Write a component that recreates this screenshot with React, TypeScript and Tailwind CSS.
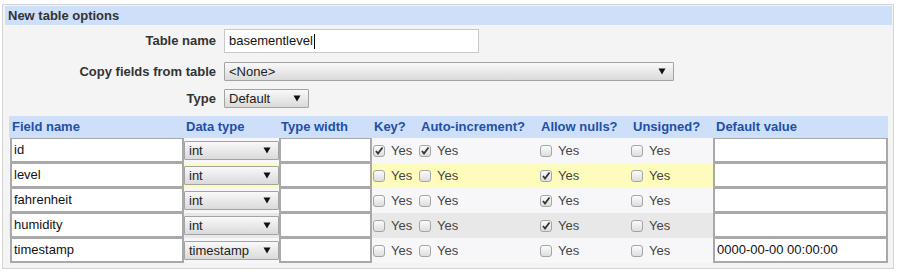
import React from "react";

function Arrow() {
  return (
    <svg width="8" height="7" viewBox="0 0 8 7" className="shrink-0">
      <polygon points="0.5,0.5 7.5,0.5 4,6.5" fill="#111" />
    </svg>
  );
}

function Select({ className, text }: { className: string; text: string }) {
  return (
    <div
      className={`flex h-[19px] items-center justify-between rounded-[1px] border border-[#a3a3a3] bg-gradient-to-b from-[#f9f9f9] to-[#dadada] pl-[4px] pr-[7px] text-[13px] leading-none text-[#222] ${className}`}
    >
      <span>{text}</span>
      <Arrow />
    </div>
  );
}

function Check({ checked }: { checked: boolean }) {
  return (
    <svg width="12" height="12" viewBox="0 0 12 12" className="shrink-0">
      <defs>
        <linearGradient id="cbg" x1="0" y1="0" x2="0" y2="1">
          <stop offset="0" stopColor="#fdfdfd" />
          <stop offset="1" stopColor="#dcdcdc" />
        </linearGradient>
      </defs>
      <rect x="0.5" y="0.5" width="11" height="11" rx="2.5" fill="url(#cbg)" stroke="#a5a5a5" />
      {checked && (
        <path d="M3 6 L5 8.5 L9.5 2.5" fill="none" stroke="#333" strokeWidth="1.8" />
      )}
    </svg>
  );
}

function CheckCell({ className, checked }: { className: string; checked: boolean }) {
  return (
    <div className={`flex h-full items-center gap-[6px] pl-[1px] ${className}`}>
      <Check checked={checked} />
      <span className="text-[13px] text-[#444]">Yes</span>
    </div>
  );
}

function Box({ className, text }: { className: string; text?: string }) {
  return (
    <div
      className={`flex h-full items-center border-t border-b-2 border-l-2 border-r-2 border-[#a9a9a9] bg-white pl-[2px] text-[13px] text-[#111] ${className}`}
    >
      {text}
    </div>
  );
}

type Row = {
  name: string;
  type: string;
  key: boolean;
  ai: boolean;
  nul: boolean;
  uns: boolean;
  def: string;
  bg: string;
};

const rows: Row[] = [
  { name: "id", type: "int", key: true, ai: true, nul: false, uns: false, def: "", bg: "bg-[#f7f7fa]" },
  { name: "level", type: "int", key: false, ai: false, nul: true, uns: false, def: "", bg: "bg-[#fefcbd]" },
  { name: "fahrenheit", type: "int", key: false, ai: false, nul: true, uns: false, def: "", bg: "bg-[#f7f7fa]" },
  { name: "humidity", type: "int", key: false, ai: false, nul: true, uns: false, def: "", bg: "bg-[#e8e8e8]" },
  { name: "timestamp", type: "timestamp", key: false, ai: false, nul: false, uns: false, def: "0000-00-00 00:00:00", bg: "bg-[#f7f7fa]" },
];

export default function App() {
  return (
    <div className="h-[274px] w-[906px] bg-white pl-[2px] pt-[4px] font-['Liberation_Sans',Arial,sans-serif] text-[13px]">
      <div className="h-[265px] w-[892px] border border-[#d4d4d4] bg-[#f4f4f4] pl-[2px] pr-[1px] pt-[1px]">
        <div className="h-[19px] bg-[#cedffa] px-[3px] font-bold leading-[19px] text-[#333]">
          New table options
        </div>

        <div className="mt-[4px] flex h-[24px] items-center gap-[8px]">
          <div className="w-[211px] text-right font-bold text-[#333]">Table name</div>
          <div className="flex h-[24px] w-[255px] items-center border border-[#c8c8c8] bg-white pl-[4px] text-[13px] text-[#111]">
            basementlevel
            <span className="ml-[1px] inline-block h-[15px] w-[1px] bg-black" />
          </div>
        </div>

        <div className="mt-[9px] flex h-[19px] items-center gap-[8px]">
          <div className="w-[211px] text-right font-bold text-[#333]">Copy fields from table</div>
          <Select className="w-[450px]" text="<None>" />
        </div>

        <div className="mt-[8px] flex h-[19px] items-center gap-[8px]">
          <div className="w-[211px] text-right font-bold text-[#333]">Type</div>
          <Select className="w-[85px]" text="Default" />
        </div>

        <div className="ml-[4px] mt-[8px] w-[879px]">
          <div className="flex h-[22px] items-center bg-[#cedffa] font-bold text-[#1f4fa6]">
            <div className="w-[175px] pl-[3px]">Field name</div>
            <div className="w-[95px] pl-[2px]">Data type</div>
            <div className="w-[93px] pl-[2px]">Type width</div>
            <div className="w-[46px] pl-[2px]">Key?</div>
            <div className="w-[120px] pl-[3px]">Auto-increment?</div>
            <div className="w-[92px] pl-[3px]">Allow nulls?</div>
            <div className="w-[82px] pl-[3px]">Unsigned?</div>
            <div className="w-[176px] pl-[4px]">Default value</div>
          </div>
          {rows.map((r) => (
            <div key={r.name} className={`flex h-[25px] ${r.bg}`}>
              <div className="h-full w-[175px] pl-[1px]">
                <Box className="w-[174px]" text={r.name} />
              </div>
              <div className="flex h-full w-[95px] items-center">
                <Select className="w-[95px]" text={r.type} />
              </div>
              <div className="h-full w-[93px]">
                <Box className="w-[93px]" />
              </div>
              <CheckCell className="w-[46px]" checked={r.key} />
              <CheckCell className="w-[120px]" checked={r.ai} />
              <CheckCell className="w-[92px] pl-[2px]" checked={r.nul} />
              <CheckCell className="w-[82px]" checked={r.uns} />
              <div className="h-full w-[176px] pl-[1px]">
                <Box className="w-[175px]" text={r.def} />
              </div>
            </div>
          ))}
        </div>
      </div>
    </div>
  );
}
